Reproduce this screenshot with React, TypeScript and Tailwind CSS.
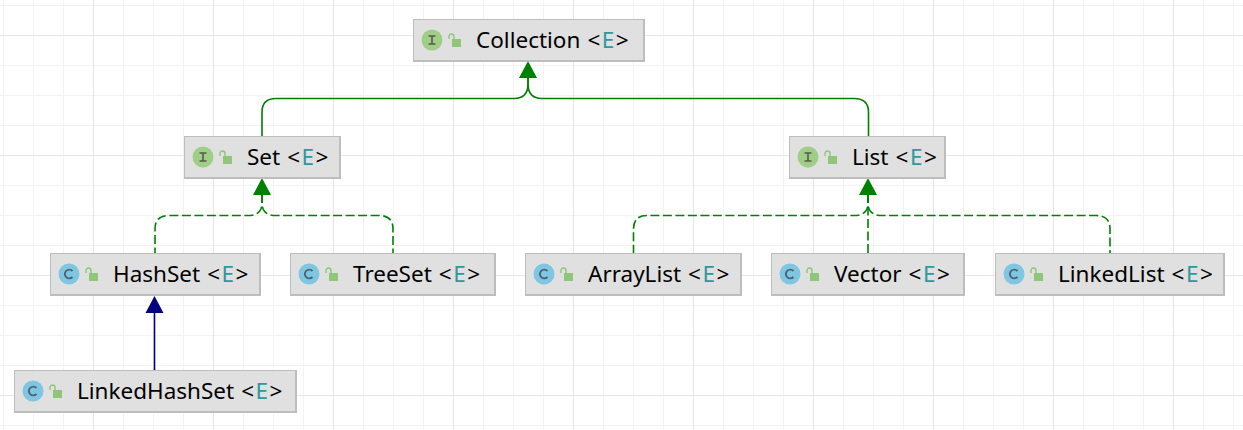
const nodes = [
  { name: "Collection", kind: "I", cls: "left-[413px] top-[19px] w-[232px]" },
  { name: "Set", kind: "I", cls: "left-[184px] top-[136px] w-[157px]" },
  { name: "List", kind: "I", cls: "left-[789px] top-[136px] w-[157px]" },
  { name: "HashSet", kind: "C", cls: "left-[50px] top-[253px] w-[211px]" },
  { name: "TreeSet", kind: "C", cls: "left-[290px] top-[253px] w-[206px]" },
  { name: "ArrayList", kind: "C", cls: "left-[525px] top-[253px] w-[217px]" },
  { name: "Vector", kind: "C", cls: "left-[771px] top-[253px] w-[194px]" },
  { name: "LinkedList", kind: "C", cls: "left-[995px] top-[253px] w-[230px]" },
  { name: "LinkedHashSet", kind: "C", cls: "left-[14px] top-[370px] w-[283px]" },
];

function KindIcon({ kind }: { kind: string }) {
  if (kind === "I") {
    return (
      <svg width="22" height="22" viewBox="0 0 22 22" className="shrink-0">
        <circle cx="11" cy="11" r="10.5" fill="#9fcf87" />
        <path d="M7.5 7h7M7.5 15h7M11 7v8" stroke="#5a5a50" strokeWidth="1.6" fill="none" />
      </svg>
    );
  }
  return (
    <svg width="22" height="22" viewBox="0 0 22 22" className="shrink-0">
      <circle cx="11" cy="11" r="10.5" fill="#7fc6e2" />
      <path d="M14.5 8a4.4 4.4 0 1 0 0 6" stroke="#4d6472" strokeWidth="1.9" fill="none" />
    </svg>
  );
}

function LockIcon() {
  return (
    <svg width="14" height="15" viewBox="0 0 14 15" className="ml-[5px] shrink-0">
      <rect x="4" y="6" width="9" height="8" fill="#8fc67a" />
      <path d="M1 6V3.5a2.5 2.5 0 0 1 5 0V6" stroke="#8fc67a" strokeWidth="1.4" fill="none" />
    </svg>
  );
}

function Node({ name, kind, cls }: { name: string; kind: string; cls: string }) {
  return (
    <div className={`absolute h-[43px] flex items-center bg-[#e0e0e0] border border-[#bdbdbd] border-r-2 border-b-2 pl-[7px] ${cls}`}>
      <KindIcon kind={kind} />
      <LockIcon />
      <span className="ml-[14px] text-[22.5px] leading-none text-black whitespace-nowrap">
        {name}
        <span className="ml-[7px]">&lt;</span>
        <span className="mx-[1.5px] text-[#2a9a9e]">E</span>&gt;
      </span>
    </div>
  );
}

function Edges() {
  return (
    <svg width="1243" height="430" viewBox="0 0 1243 430" className="absolute left-0 top-0" fill="none">
      <g stroke="#008000" strokeWidth="1.6">
        <path d="M528 76V84Q528 98.5 514 98.5H276Q262 98.5 262 112V136" />
        <path d="M528 76V84Q528 98.5 542 98.5H854Q868.5 98.5 868.5 112V136" />
        <g strokeDasharray="9 3.5">
          <path d="M262 194V203Q262 215.5 248 215.5H169Q155 215.5 155 229V253" />
          <path d="M262 194V203Q262 215.5 276 215.5H379Q393 215.5 393 229V253" />
          <path d="M868 194V203Q868 215.5 854 215.5H647Q633.5 215.5 633.5 229V253" />
          <path d="M868 194V203Q868 215.5 882 215.5H1096Q1110 215.5 1110 229V253" />
          <path d="M868 194V253" />
        </g>
      </g>
      <path d="M154.5 312V370" stroke="#000080" strokeWidth="1.6" />
      <path d="M528 61L537 78H519Z" fill="#008000" />
      <path d="M262 178L271 195H253Z" fill="#008000" />
      <path d="M868 178L877 195H859Z" fill="#008000" />
      <path d="M154.5 296L163.5 313H145.5Z" fill="#000080" />
    </svg>
  );
}

export default function App() {
  return (
    <div
      className="relative w-[1243px] h-[430px] overflow-hidden bg-white font-['Noto_Sans',sans-serif] bg-[linear-gradient(to_right,#e6e6e6_1px,transparent_1px),linear-gradient(to_bottom,#e6e6e6_1px,transparent_1px),linear-gradient(to_right,#f3f3f3_1px,transparent_1px),linear-gradient(to_bottom,#f3f3f3_1px,transparent_1px)] bg-size-[120px_120px,120px_120px,30px_30px,30px_30px] bg-position-[93px_35px,93px_35px,3px_5px,3px_5px]"
    >
      <Edges />
      {nodes.map((n) => (
        <Node key={n.name} {...n} />
      ))}
    </div>
  );
}
